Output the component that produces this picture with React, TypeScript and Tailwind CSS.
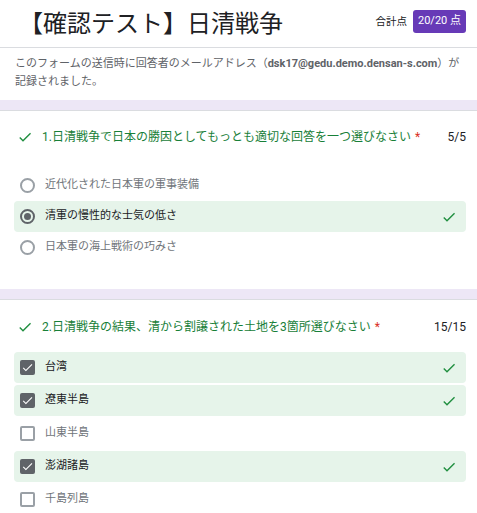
const font = "font-['Roboto','Noto_Sans_CJK_JP',sans-serif]";

function Check({ className }: { className?: string }) {
  return (
    <svg viewBox="0 0 24 24" className={className} fill="currentColor">
      <path d="M9 16.17L4.83 12l-1.42 1.41L9 19 21 7l-1.41-1.41z" />
    </svg>
  );
}

function Radio({ checked }: { checked: boolean }) {
  return (
    <span
      className={`flex h-[15px] w-[15px] shrink-0 items-center justify-center rounded-full border-2 ${
        checked ? "border-[#5f6368]" : "border-[#9aa0a6]"
      }`}
    >
      {checked && <span className="h-[7px] w-[7px] rounded-full bg-[#5f6368]" />}
    </span>
  );
}

function Box({ checked }: { checked: boolean }) {
  if (checked) {
    return (
      <span className="flex h-[15px] w-[15px] shrink-0 items-center justify-center rounded-[2px] bg-[#5f6368]">
        <Check className="h-[13px] w-[13px] text-white" />
      </span>
    );
  }
  return <span className="h-[15px] w-[15px] shrink-0 rounded-[2px] border-2 border-[#9aa0a6]" />;
}

function Option({
  label,
  checked,
  kind,
}: {
  label: string;
  checked: boolean;
  kind: "radio" | "box";
}) {
  return (
    <div
      className={`flex h-[31px] items-center rounded-[4px] pl-[6px] pr-[9px] ${
        checked ? "bg-[#e6f4ea]" : ""
      }`}
    >
      {kind === "radio" ? <Radio checked={checked} /> : <Box checked={checked} />}
      <span
        className={`ml-[10px] flex-1 text-[11px] ${checked ? "text-[#202124]" : "text-[#70757a]"}`}
      >
        {label}
      </span>
      {checked && <Check className="h-[16px] w-[16px] text-[#1e8e3e]" />}
    </div>
  );
}

function QuestionHead({ title, score }: { title: string; score: string }) {
  return (
    <div className="flex h-[20px] items-center pl-[3px]">
      <Check className="h-[16px] w-[16px] text-[#1e8e3e]" />
      <span className="ml-[9px] flex-1 text-[12px] text-[#188038]">
        {title}
        <span className="ml-[4px] text-[#d93025]">*</span>
      </span>
      <span className="text-[12px] text-[#202124]">{score}</span>
    </div>
  );
}

function Band() {
  return <div className="h-[11px] border-b border-[#dadce0] bg-[#ede7f6]" />;
}

export default function App() {
  return (
    <div className={`h-[513px] w-[477px] overflow-hidden bg-white ${font}`}>
      <header className="flex h-[48px] items-center justify-between border-b border-[#dadce0] pl-[19px] pr-[11px]">
        <h1 className="text-[24px] leading-none text-[#202124]">【確認テスト】日清戦争</h1>
        <div className="flex items-center gap-[6px] self-start pt-[10px]">
          <span className="text-[10.5px] text-[#202124]">合計点</span>
          <span className="flex h-[23px] items-center rounded-[3px] bg-[#673ab7] px-[5px] text-[11px] text-white">
            20/20 点
          </span>
        </div>
      </header>

      <div className="h-[52px] px-[15px] pt-[7px] text-[11px] leading-[18px] text-[#5f6368]">
        このフォームの送信時に回答者のメールアドレス（<b>dsk17@gedu.demo.densan-s.com</b>）が記録されました。
      </div>

      <Band />

      <section className="pl-[14px] pr-[11px] pt-[16px] pb-[26px]">
        <QuestionHead
          title="1.日清戦争で日本の勝因としてもっとも適切な回答を一つ選びなさい"
          score="5/5"
        />
        <div className="mt-[23px] flex flex-col">
          <Option kind="radio" checked={false} label="近代化された日本軍の軍事装備" />
          <Option kind="radio" checked label="清軍の慢性的な士気の低さ" />
          <Option kind="radio" checked={false} label="日本軍の海上戦術の巧みさ" />
        </div>
      </section>

      <Band />

      <section className="pl-[14px] pr-[11px] pt-[17px]">
        <QuestionHead
          title="2.日清戦争の結果、清から割譲された土地を3箇所選びなさい"
          score="15/15"
        />
        <div className="mt-[15px] flex flex-col gap-[2px]">
          <Option kind="box" checked label="台湾" />
          <Option kind="box" checked label="遼東半島" />
          <Option kind="box" checked={false} label="山東半島" />
          <Option kind="box" checked label="澎湖諸島" />
          <Option kind="box" checked={false} label="千島列島" />
        </div>
      </section>
    </div>
  );
}
